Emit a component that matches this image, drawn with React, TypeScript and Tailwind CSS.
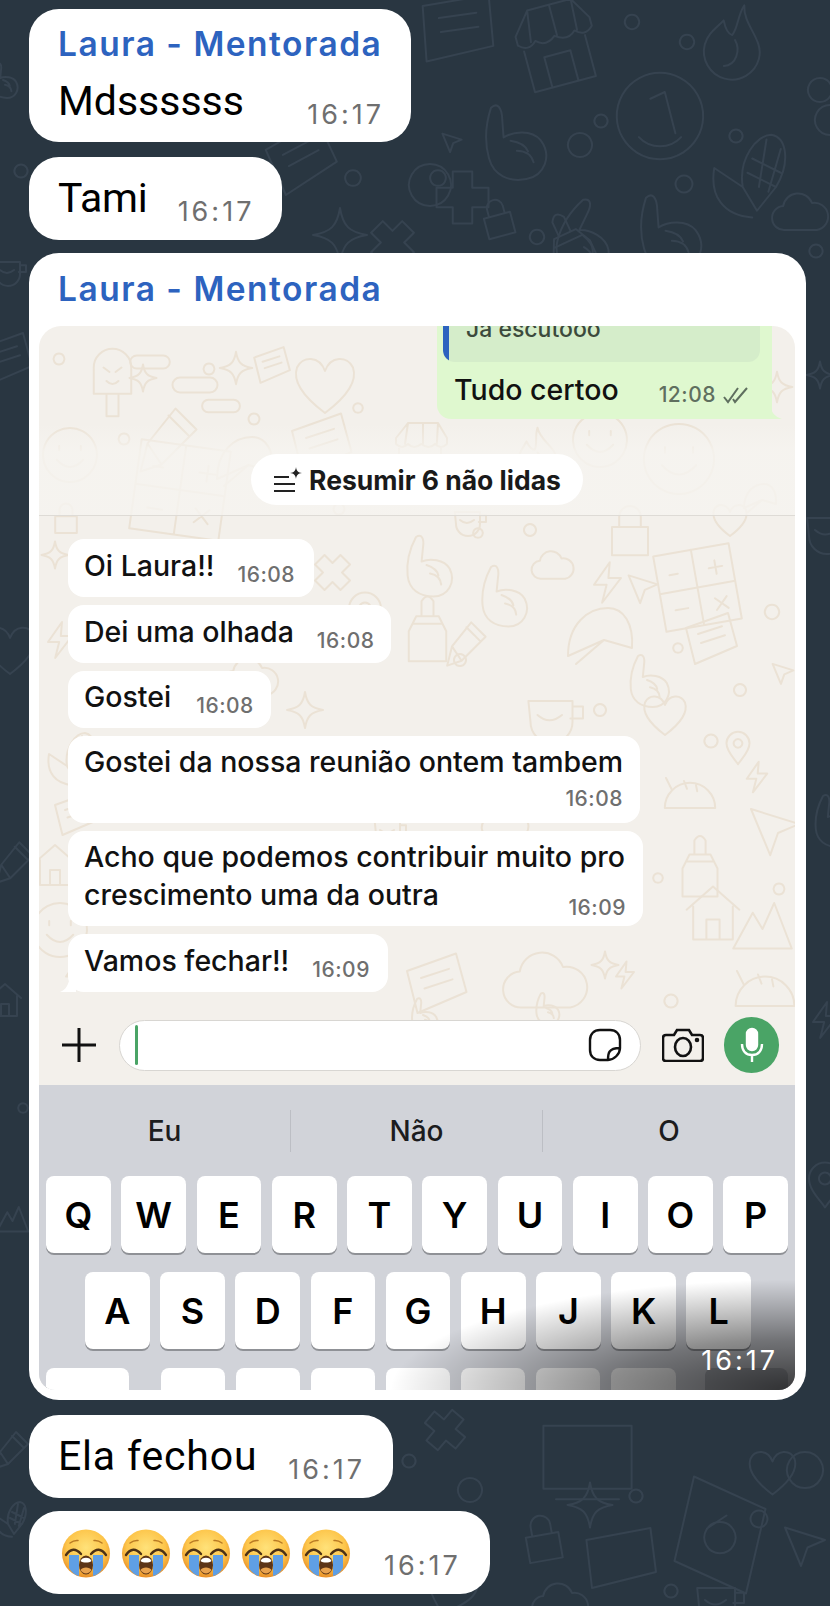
import React from "react";

const shapes: Record<string, string> = {
  store: "M10 30L30 5H80L95 30V40Q85 50 75 40Q65 50 52 40Q40 50 30 40Q20 50 10 40ZM15 48V95H85V48M30 5L25 40M55 5V40M80 5L78 40M35 60H65V95H35Z",
  clock: "M50 5A45 45 0 1 1 49.9 5ZM40 32L55 25L66 68M28 72A30 30 0 0 0 72 72",
  flame: "M50 5C55 30 85 40 85 65A35 35 0 0 1 15 65C15 50 25 40 30 30C35 40 40 45 45 45C50 35 45 20 50 5ZM50 50C60 60 60 80 45 85",
  hand: "M30 10C38 5 42 12 40 25L38 45C50 40 70 42 78 55C88 75 75 95 55 95C35 95 20 85 18 65C16 45 22 25 30 10ZM45 50Q60 55 62 65M50 62Q65 65 66 78",
  corn: "M45 60C40 30 60 5 75 5C92 8 95 35 80 60L60 85L45 60M55 30L85 45M50 45L80 60M70 10L62 60M85 20L72 65M45 60L15 40C10 70 25 90 55 92",
  star: "M50 5C55 35 65 45 95 50C65 55 55 65 50 95C45 65 35 55 5 50C35 45 45 35 50 5Z",
  cross: "M35 10H65V35H90V65H65V90H35V65H10V35H35Z",
  lock: "M20 45H80V92H20ZM32 45V28A18 18 0 0 1 68 28V45",
  bottle: "M35 35H65L75 55V95H25V55ZM30 45H70M42 35V15Q50 2 58 15V35",
  cloud: "M25 75A20 20 0 0 1 22 35A25 25 0 0 1 70 30A22 22 0 0 1 78 75Z",
  heart: "M50 90C10 60 5 40 10 25C18 8 42 8 50 30C58 8 82 8 90 25C95 40 90 60 50 90Z",
  dot: "M50 20A30 30 0 1 1 49.9 20Z",
  capsule: "M20 35H80A15 15 0 0 1 80 65H20A15 15 0 0 1 20 35Z",
  popsicle: "M25 65V30A25 25 0 0 1 75 30V65ZM42 65V95H58V65M38 30L46 36M62 30L54 36M42 48Q50 56 58 48",
  cup: "M12 30H75V60A30 30 0 0 1 15 60ZM75 38H90V55H72M25 50Q42 65 60 50",
  taco: "M8 80A42 42 0 0 1 92 80ZM20 50L10 30M40 35L45 48M60 42L62 52",
  house: "M10 45L50 10L90 45M20 40V90H80V40M40 90V60H60V90",
  mountain: "M5 90L35 35L50 60L68 20L95 90Z",
  pin: "M50 5A32 32 0 0 1 82 37C82 60 60 80 50 95C40 80 18 60 18 37A32 32 0 0 1 50 5ZM50 25A12 12 0 1 1 49.9 25Z",
  smile: "M50 5A45 45 0 1 1 49.9 5ZM32 35V42M68 35V42M28 58Q50 82 72 58",
  grid: "M5 5H95V95H5ZM50 5V95M5 50H95M30 30H20M75 22V38M67 30H83M20 72H35M68 66L82 80M82 66L68 80",
  pen: "M65 5L95 35L45 85L15 95L25 55ZM55 15L85 45M25 55L45 85",
  bolt: "M55 5L20 55H48L38 95L80 40H52Z",
  arrow: "M10 15L90 40L55 55L42 92Z",
  paper: "M10 30L80 5L95 60L25 90ZM30 40L70 27M35 55L75 42",
  cap: "M10 70C10 30 35 10 60 10C80 10 92 30 90 60L55 50ZM55 50L20 80",
  bag: "M30 5L85 30L70 95L15 70ZM40 45L55 35M50 40A12 12 0 1 1 49.9 40Z",
  clockbox: "M8 15H92V75H8ZM20 85H80",
  passbox: "M8 25L88 10L95 65L15 85Z",
};

type Mark = [string, number, number, number, number?];

const darkMarks: Mark[] = [
  ["paper", 410, -15, 90, 10], ["store", 510, 0, 90, -15], ["clock", 612, 68, 96], ["flame", 695, 0, 80, 15],
  ["corn", 700, 130, 95], ["hand", 470, 95, 90, -10], ["hand", 545, 195, 85, 20], ["dot", 800, 70, 40], ["dot", 620, 10, 24],
  ["dot", 560, 125, 40], ["dot", 590, 110, 22], ["dot", 425, 165, 26], ["dot", 395, 150, 70], ["cross", 430, 165, 65],
  ["star", 310, 205, 60], ["cross", 365, 215, 55, 45], ["lock", 475, 195, 45, -15], ["bottle", 530, 205, 80, -25],
  ["hand", 625, 185, 90, -10], ["cloud", 770, 185, 60], ["dot", 805, 95, 50], ["dot", 525, 225, 24], ["dot", 670, 170, 28],
  ["dot", 675, 30, 24], ["dot", 725, 125, 22], ["paper", 260, 120, 80, -10], ["dot", 340, 165, 26], ["arrow", 440, 130, 24],
  ["heart", -20, 620, 60], ["paper", -25, 330, 60], ["cup", -10, 250, 40], ["cup", 800, 500, 60], ["star", 805, 360, 30],
  ["hand", 805, 790, 60], ["dot", 805, 240, 22], ["dot", 10, 160, 22], ["hand", -15, 60, 40], ["pen", -10, 840, 45],
  ["house", -15, 980, 40], ["bolt", 805, 1000, 40], ["pin", 800, 1160, 50], ["mountain", -5, 1200, 35], ["dot", 15, 1100, 16],
  ["pen", -10, 1430, 40], ["cross", 420, 1405, 50, 40], ["dot", 398, 1450, 22], ["clockbox", 535, 1410, 105],
  ["star", 565, 1480, 50], ["dot", 450, 1470, 40], ["dot", 625, 1485, 22], ["lock", 515, 1510, 55, -10], ["passbox", 580, 1520, 80],
  ["bag", 655, 1470, 130], ["heart", 745, 1445, 55], ["dot", 775, 1440, 60], ["dot", 745, 1505, 28], ["arrow", 780, 1520, 50],
  ["dot", 660, 1580, 22], ["cup", 690, 1570, 60], ["heart", 420, 1560, 60, 20], ["corn", -10, 1500, 40], ["cloud", 530, 1575, 60],
];

const lightMarks: Mark[] = [
  ["popsicle", 75, 345, 75], ["star", 128, 363, 30], ["capsule", 128, 340, 44], ["capsule", 170, 360, 50], ["capsule", 200, 385, 42],
  ["star", 218, 350, 36], ["paper", 250, 345, 42], ["heart", 290, 350, 70], ["paper", 285, 410, 70], ["store", 390, 420, 60],
  ["pen", 130, 405, 70], ["grid", 130, 440, 100, 8], ["cap", 210, 430, 70], ["smile", 640, 420, 78], ["flame", 510, 425, 55],
  ["smile", 570, 410, 60], ["lock", 600, 500, 60], ["smile", 40, 425, 60], ["capsule", 730, 330, 40], ["star", 760, 370, 34],
  ["grid", 655, 545, 85, -10], ["cap", 560, 600, 80], ["hand", 470, 560, 70], ["cloud", 530, 545, 45], ["hand", 395, 530, 70],
  ["bottle", 390, 590, 75], ["cross", 310, 550, 45, 45], ["pin", 340, 590, 50], ["bolt", 585, 560, 45], ["arrow", 625, 570, 36],
  ["pen", 440, 620, 48], ["paper", 680, 610, 60], ["hand", 620, 650, 60], ["cup", 520, 680, 70], ["heart", 640, 690, 50],
  ["star", 285, 690, 40], ["cloud", 220, 650, 60], ["taco", 660, 760, 60], ["bolt", 740, 760, 34], ["bottle", 665, 830, 70],
  ["arrow", 745, 800, 60], ["cup", 370, 810, 40], ["house", 680, 880, 66], ["mountain", 730, 890, 65], ["hand", 405, 995, 40],
  ["cloud", 500, 940, 90], ["bolt", 610, 960, 30], ["taco", 730, 950, 70], ["star", 590, 950, 30], ["paper", 400, 950, 70],
  ["smile", 30, 900, 60], ["house", 30, 840, 50], ["cap", 740, 480, 40], ["corn", 40, 730, 60], ["bolt", 40, 620, 40],
  ["dot", 200, 360, 18], ["dot", 450, 650, 20], ["dot", 560, 740, 18], ["dot", 700, 730, 22], ["dot", 420, 790, 18],
  ["dot", 730, 680, 20], ["dot", 520, 520, 20], ["dot", 760, 600, 24], ["dot", 660, 990, 22], ["dot", 330, 500, 18],
  ["dot", 50, 350, 18], ["dot", 115, 430, 18], ["dot", 245, 410, 18], ["dot", 470, 525, 16], ["dot", 350, 400, 16],
  ["dot", 590, 700, 20], ["dot", 670, 640, 16], ["dot", 480, 740, 20], ["dot", 770, 880, 18], ["dot", 650, 870, 16],
  ["cloud", 480, 800, 50], ["star", 40, 540, 30], ["lock", 48, 500, 36], ["heart", 710, 500, 40], ["paper", 50, 790, 50],
  ["hand", 530, 990, 36], ["pin", 720, 730, 36], ["bolt", 60, 960, 30], ["cup", 450, 500, 40], ["arrow", 770, 660, 26],
];

const Wallpaper = ({ marks, stroke, viewBox, width, height }: { marks: Mark[]; stroke: string; viewBox: string; width: number; height: number }) => (
  <svg className="absolute left-0 top-0" width={width} height={height} viewBox={viewBox} fill="none" stroke={stroke} strokeWidth="2" strokeLinejoin="round" strokeLinecap="round">
    {marks.map(([name, x, y, size, rot], i) => (
      <path
        key={i}
        d={shapes[name]}
        vectorEffect="non-scaling-stroke"
        transform={`translate(${x} ${y}) scale(${size / 100}) rotate(${rot ?? 0} 50 50)`}
      />
    ))}
  </svg>
);

const CryingFace = () => (
  <svg width="50" height="49" viewBox="0 0 50 49" className="shrink-0">
    <defs>
      <radialGradient id="faceFill" cx="50%" cy="38%" r="62%">
        <stop offset="0%" stopColor="#ffe27a" />
        <stop offset="65%" stopColor="#fdc54a" />
        <stop offset="100%" stopColor="#e98f28" />
      </radialGradient>
    </defs>
    <circle cx="25" cy="24.500" r="24" fill="url(#faceFill)" />
    <path d="M8 26H18V47C14 46 10 43 8 39ZM32 26H42V39C40 43 36 46 32 47Z" fill="#5f9fe4" />
    <path d="M5 26Q12 16 20 25M30 25Q38 16 45 26" fill="none" stroke="#4d3115" strokeWidth="2.400" strokeLinecap="round" />
    <path d="M9 14Q13 11 17 11.500M33 11.500Q37 11 41 14" fill="none" stroke="#b97a24" strokeWidth="1.500" strokeLinecap="round" />
    <ellipse cx="25" cy="36" rx="7" ry="9.500" fill="#5b3417" />
    <path d="M19.500 32C20.500 27.500 29.500 27.500 30.500 32C28 34 22 34 19.500 32Z" fill="#fff" />
    <path d="M19.500 41C21 37.500 29 37.500 30.500 41C28 45.500 22 45.500 19.500 41Z" fill="#e8a24e" />
  </svg>
);

const Time = ({ children }: { children: React.ReactNode }) => (
  <span className="font-['Inter',sans-serif] text-[27px] font-normal leading-[30px] tracking-[3px] text-[#6f6f6f]">{children}</span>
);

const Chat = ({ text, time, gap, cls, textCls }: { text: string; time: string; gap: string; cls: string; textCls: string }) => (
  <div className={`flex ${cls} ml-[29px] h-[83px] w-fit items-end rounded-[30px] bg-white pb-[17px] pl-[29px] pr-[28px]`}>
    <span className={`mb-[2px] text-[41px] leading-[46px] text-black ${textCls}`}>{text}</span>
    <span className={`mb-[-5px] ${gap}`}>
      <Time>{time}</Time>
    </span>
  </div>
);

const Name = () => (
  <div className="font-['Inter',sans-serif] text-[33.500px] font-semibold leading-[40px] tracking-[1.5px] text-[#2d63bf]">Laura - Mentorada</div>
);

const Inner = ({ text, time, cls, timeCls }: { text: string; time: string; cls: string; timeCls: string }) => (
  <div className={`flex items-end rounded-[16px] bg-white pl-[16px] ${cls}`}>
    <span className="text-[28.500px] font-medium leading-[34px] text-[#111]">{text}</span>
    <span className={`text-[21px] font-medium leading-[24px] tracking-[0.5px] text-[#6f6f6f] ${timeCls}`}>{time}</span>
  </div>
);

const Key = ({ label, cls = "flex-1" }: { label?: string; cls?: string }) => (
  <div className={`flex h-[77px] items-center justify-center rounded-[8px] bg-white text-[36px] font-semibold text-black shadow-[0_2px_0_#8f9196] ${cls}`}>
    {label}
  </div>
);

const App = () => {
  return (
    <div className="relative h-[1606px] w-[830px] overflow-hidden bg-[#293641] font-['Roboto',sans-serif]">
      <Wallpaper marks={darkMarks} stroke="#364350" viewBox="0 0 830 1606" width={830} height={1606} />

      <div className="relative flex flex-col pt-[9px]">
        <div className="ml-[29px] h-[133px] w-[382px] rounded-[30px] bg-white pl-[29px] pr-[27px] pt-[15px]">
          <Name />
          <div className="mt-[14px] flex items-end justify-between">
            <span className="text-[41px] leading-[46px] text-black">Mdssssss</span>
            <span className="mb-[-7px]">
              <Time>16:17</Time>
            </span>
          </div>
        </div>

        <Chat text="Tami" time="16:17" gap="ml-[30px]" cls="mt-[15px]" textCls="tracking-[-0.2px]" />

        <div className="ml-[29px] mt-[13px] flex h-[1147px] w-[777px] flex-col rounded-[30px] bg-white p-[10px] pt-0">
          <div className="pl-[19px] pt-[16px]">
            <Name />
          </div>
          <div className="relative mt-[17px] flex h-[1064px] w-[756px] flex-col overflow-hidden rounded-[22px] rounded-b-[16px] bg-[#f3f0eb] font-['Inter',sans-serif]">
            <Wallpaper marks={lightMarks} stroke="#ebe2d5" viewBox="39 326 756 760" width={756} height={760} />

            {/* mensagem enviada */}
            <div className="relative ml-[398px] h-[93px] w-[335px] shrink-0 rounded-b-[14px] rounded-br-none bg-[#dff8cf]">
              <svg width="12" height="14" viewBox="0 0 12 14" className="absolute bottom-0 right-[-10px]">
                <path d="M0 0C1 7 5 12 12 14H0Z" fill="#dff8cf" />
              </svg>
              <div className="ml-[6px] flex h-[36px] w-[317px] overflow-hidden rounded-b-[12px] bg-[#d5edca]">
                <div className="h-full w-[6px] bg-[#2d63bf]" />
                <span className="mt-[-12px] pl-[17px] text-[23px] font-medium leading-[30px] text-[#3c4a3c]">Já escutooo</span>
              </div>
              <div className="mt-[11px] flex items-end pl-[17px]">
                <span className="text-[28.500px] font-medium leading-[34px] text-[#111]">Tudo certoo</span>
                <span className="ml-[40px] text-[21px] font-medium leading-[24px] tracking-[0.5px] text-[#5f6f5f]">12:08</span>
                <svg width="28" height="18" viewBox="0 0 28 18" className="mb-[3px] ml-[6px]" fill="none" stroke="#5f6f5f" strokeWidth="2">
                  <path d="M2 11L6 16L16 2M11 13L13 16L25 2" />
                </svg>
              </div>
            </div>

            {/* faixa de não lidas */}
            <div className="relative mt-[5px] flex h-[92px] shrink-0 items-end justify-center border-b border-[#dedbd6] bg-[linear-gradient(#f3f0eb00,#f6f4f0d0_30%,#f6f4f0d0)] pb-[10px]">
              <div className="flex h-[51px] w-[332px] items-center justify-center gap-[6px] rounded-full bg-white">
                <svg width="30" height="28" viewBox="0 0 30 28" fill="none" stroke="#222" strokeWidth="1.800">
                  <path d="M1 11H16M1 18H22M1 25H22" />
                  <path d="M23 1C23.500 5 25 6.500 29 7C25 7.500 23.500 9 23 13C22.500 9 21 7.500 17 7C21 6.500 22.500 5 23 1Z" fill="#222" stroke="none" />
                </svg>
                <span className="text-[26.500px] font-bold leading-[30px] text-[#1a1a1a]">Resumir 6 não lidas</span>
              </div>
            </div>

            {/* mensagens recebidas */}
            <div className="relative ml-[29px] mt-[23px] flex shrink-0 flex-col items-start gap-[8px]">
              <Inner text="Oi Laura!!" time="16:08" cls="h-[58px] w-[246px] pb-[14px]" timeCls="ml-[23px] mb-[-4px]" />
              <Inner text="Dei uma olhada" time="16:08" cls="h-[58px] w-[323px] pb-[14px]" timeCls="ml-[23px] mb-[-4px]" />
              <Inner text="Gostei" time="16:08" cls="h-[57px] w-[203px] pb-[14px]" timeCls="ml-[25px] mb-[-4px]" />
              <div className="flex h-[87px] w-[572px] flex-col rounded-[16px] bg-white pl-[16px] pr-[17px] pt-[9px]">
                <span className="whitespace-nowrap text-[28.500px] font-medium leading-[34px] text-[#111]">Gostei da nossa reunião ontem tambem</span>
                <span className="mt-[8px] self-end text-[21px] font-medium leading-[24px] tracking-[0.5px] text-[#6f6f6f]">16:08</span>
              </div>
              <div className="relative h-[95px] w-[575px] rounded-[16px] bg-white pl-[16px] pt-[7px]">
                <div className="whitespace-nowrap text-[28.500px] font-medium leading-[38px] text-[#111]">Acho que podemos contribuir muito pro</div>
                <div className="flex items-end justify-between pr-[17px]">
                  <span className="whitespace-nowrap text-[28.500px] font-medium leading-[38px] text-[#111]">crescimento uma da outra</span>
                  <span className="mb-[-6px] text-[21px] font-medium leading-[24px] tracking-[0.5px] text-[#6f6f6f]">16:09</span>
                </div>
              </div>
              <div className="relative">
                <svg width="16" height="16" viewBox="0 0 16 16" className="absolute bottom-0 left-[-8px]">
                  <path d="M16 0V16H0C6 14 9 8 10 0Z" fill="#fff" />
                </svg>
                <Inner text="Vamos fechar!!" time="16:09" cls="relative h-[58px] w-[320px] pb-[14px]" timeCls="ml-[23px] mb-[-4px]" />
              </div>
            </div>

            {/* barra de digitar */}
            <div className="relative mt-[24px] flex h-[58px] shrink-0 items-center">
              <svg width="36" height="36" viewBox="0 0 36 36" className="ml-[22px] shrink-0" fill="none" stroke="#111" strokeWidth="3">
                <path d="M18 1V35M1 18H35" />
              </svg>
              <div className="ml-[22px] flex h-[51px] w-[522px] items-center justify-between rounded-full border border-[#d8d6d2] bg-white pl-[15px] pr-[18px]">
                <div className="h-[40px] w-[3px] rounded-full bg-[#4aa466]" />
                <svg width="34" height="34" viewBox="0 0 34 34" fill="none" stroke="#111" strokeWidth="2.400">
                  <path d="M20 32H12C6 32 2 28 2 22V12C2 6 6 2 12 2H22C28 2 32 6 32 12V20C32 26 26 32 20 32ZM20 32C20 26 20 20 32 20" />
                </svg>
              </div>
              <svg width="42" height="34" viewBox="0 0 42 34" className="ml-[21px] shrink-0" fill="none" stroke="#111" strokeWidth="2.600">
                <path d="M4 7H12L15 2H27L30 7H38C40 7 41 8 41 10V30C41 32 40 33 38 33H4C2 33 1 32 1 30V10C1 8 2 7 4 7Z" />
                <ellipse cx="21" cy="19" rx="8" ry="9" />
                <circle cx="35" cy="12" r="1" fill="#111" />
              </svg>
              <div className="ml-[20px] flex h-[56px] w-[55px] shrink-0 items-center justify-center rounded-full bg-[#4aa466]">
                <svg width="24" height="36" viewBox="0 0 24 36" fill="none" stroke="#fff" strokeWidth="2.400">
                  <rect x="7" y="2" width="10" height="21" rx="5" fill="#fff" />
                  <path d="M2 17C2 24 6 28 12 28C18 28 22 24 22 17M12 28V35" />
                </svg>
              </div>
            </div>

            {/* teclado */}
            <div className="relative mt-[11px] flex min-h-0 flex-1 flex-col bg-[#d1d3d9]">
              <div className="flex h-[91px] shrink-0 items-center text-[28px] font-medium text-[#1c1c1e]">
                <div className="flex h-[42px] w-[252px] items-center justify-center border-r border-[#bcbec4]">Eu</div>
                <div className="flex h-[42px] w-[252px] items-center justify-center border-r border-[#bcbec4]">Não</div>
                <div className="flex h-[42px] flex-1 items-center justify-center">O</div>
              </div>
              <div className="flex shrink-0 gap-[10.500px] pl-[7px] pr-[7px]">
                {["Q", "W", "E", "R", "T", "Y", "U", "I", "O", "P"].map((k) => (
                  <Key key={k} label={k} />
                ))}
              </div>
              <div className="mt-[19px] flex shrink-0 gap-[10.500px] pl-[46px] pr-[44px]">
                {["A", "S", "D", "F", "G", "H", "J", "K", "L"].map((k) => (
                  <Key key={k} label={k} />
                ))}
              </div>
              <div className="mt-[19px] flex shrink-0 gap-[10.500px] pl-[7px] pr-[7px]">
                <Key cls="mr-[21px] w-[83px]" />
                <Key />
                <Key />
                <Key />
                <Key />
                <Key />
                <Key />
                <Key />
                <Key cls="ml-[19px] w-[83px] !bg-[#aeb1b8]" />
              </div>
            </div>

            <div className="absolute bottom-0 right-0 flex h-[120px] w-[440px] items-end justify-end bg-[radial-gradient(ellipse_at_100%_100%,rgba(0,0,0,0.72),rgba(0,0,0,0.45)_30%,rgba(0,0,0,0)_65%)] pb-[14px] pr-[17px]">
              <span className="text-[27px] leading-[30px] tracking-[3px] text-white">16:17</span>
            </div>
          </div>
        </div>

        <Chat text="Ela fechou" time="16:17" gap="ml-[31px]" cls="mt-[15px]" textCls="tracking-[0.8px]" />

        <div className="ml-[29px] mt-[13px] flex h-[83px] w-[461px] items-end rounded-[30px] bg-white pb-[17px] pl-[32px]">
          <div className="mb-[-1px] flex gap-[10px]">
            <CryingFace />
            <CryingFace />
            <CryingFace />
            <CryingFace />
            <CryingFace />
          </div>
          <span className="mb-[-5px] ml-[33px]">
            <Time>16:17</Time>
          </span>
        </div>
      </div>
    </div>
  );
};

export default App;
